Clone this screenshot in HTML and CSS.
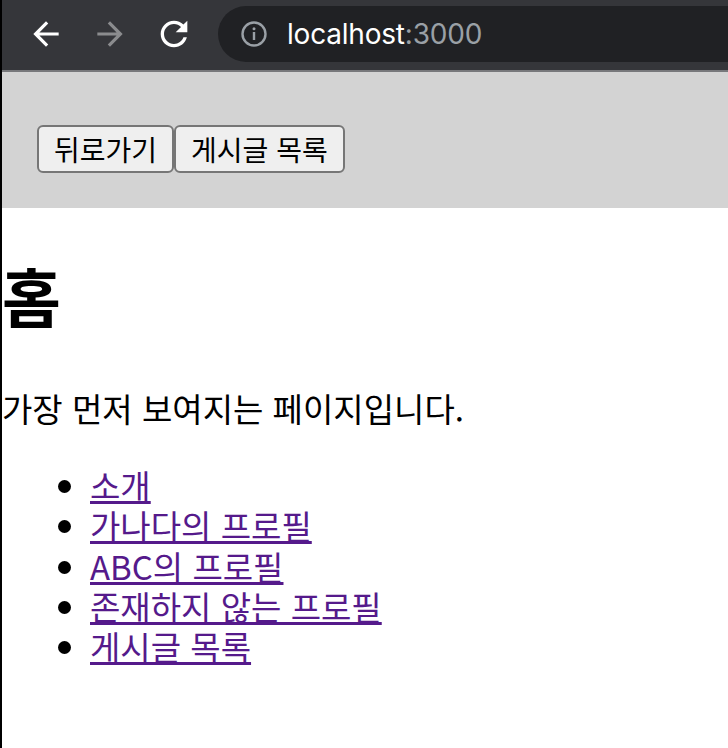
FILE: index.html
```html
<!DOCTYPE html>
<html lang="ko">
<head>
<meta charset="utf-8">
<title>localhost:3000</title>
<link rel="stylesheet" href="styles.css">
</head>
<body>
<div class="window">
  <div class="chrome">
    <svg class="icon icon-back" viewBox="0 0 24 24" width="38" height="38"><path d="M20 11H7.830l5.59-5.59L12 4l-8 8 8 8 1.41-1.41L7.83 13H20v-2z" fill="#ffffff"/></svg>
    <svg class="icon icon-fwd" viewBox="0 0 24 24" width="38" height="38"><path d="M12 4l-1.41 1.41L16.17 11H4v2h12.17l-5.58 5.59L12 20l8-8z" fill="#8b8c8e"/></svg>
    <svg class="icon icon-reload" viewBox="0 0 24 24" width="40" height="40"><path d="M17.65 6.35C16.2 4.9 14.21 4 12 4c-4.42 0-7.990 3.58-7.99 8s3.57 8 7.99 8c3.73 0 6.84-2.55 7.73-6h-2.08c-.82 2.33-3.04 4-5.65 4-3.31 0-6-2.69-6-6s2.69-6 6-6c1.66 0 3.14.69 4.22 1.78L13 11h7V4l-2.35 2.35z" fill="#ffffff"/></svg>
    <div class="omnibox">
      <svg class="info" viewBox="0 0 26 26" width="26" height="26"><circle cx="13" cy="13" r="11.5" fill="none" stroke="#9aa0a6" stroke-width="2.4"/><rect x="11.8" y="11" width="2.4" height="8" fill="#9aa0a6"/><circle cx="13" cy="7.8" r="1.5" fill="#9aa0a6"/></svg>
      <span class="url"><span class="host">localhost</span><span class="port">:3000</span></span>
    </div>
  </div>
  <div class="page">
    <header class="topnav"><button class="btn">뒤로가기</button><button class="btn">게시글 목록</button></header>
    <main class="content">
      <h1 class="title">홈</h1>
      <p class="lead">가장 먼저 보여지는 페이지입니다.</p>
      <ul class="links">
        <li><a href="#">소개</a></li>
        <li><a href="#">가나다의 프로필</a></li>
        <li><a href="#">ABC의 프로필</a></li>
        <li><a href="#">존재하지 않는 프로필</a></li>
        <li><a href="#">게시글 목록</a></li>
      </ul>
    </main>
  </div>
</div>
</body>
</html>
```

FILE: styles.css
```css
html, body {
  margin: 0;
  padding: 0;
  background: #ffffff;
}

.window {
  min-height: 748px;
  border-left: 2px solid #000000;
  font-family: "Noto Sans CJK KR", "Noto Sans", sans-serif;
  overflow: hidden;
}

.chrome {
  display: flex;
  align-items: center;
  height: 56px;
  padding: 6px 0 8px 0;
  background: #35363a;
  border-bottom: 2px solid #77787b;
}

.icon {
  display: block;
  flex: none;
}

.icon-back {
  margin-left: 25px;
}

.icon-fwd {
  margin-left: 26px;
}

.icon-reload {
  margin-left: 25px;
}

.omnibox {
  flex: 1;
  display: flex;
  align-items: center;
  height: 56px;
  margin-left: 24px;
  padding-left: 23px;
  background: #202124;
  border-radius: 28px 0 0 28px;
}

.info {
  display: block;
  flex: none;
}

.url {
  margin-left: 20px;
  font-family: Inter, Roboto, "Liberation Sans", sans-serif;
  font-size: 28px;
  line-height: 56px;
  letter-spacing: -0.2px;
}

.host {
  color: #ffffff;
}

.port {
  color: #9aa0a6;
}

.topnav {
  display: flex;
  padding: 53px 0 35px 35px;
  background: #d3d3d3;
}

.btn {
  margin: 0;
  padding: 0 15px;
  height: 48px;
  font-family: "Noto Sans CJK KR", sans-serif;
  font-size: 28px;
  line-height: 44px;
  color: #000000;
  background: #efefef;
  border: 2px solid #767676;
  border-radius: 6px;
}

.content {
  color: #000000;
}

.title {
  margin: 46px 0 0 0;
  font-size: 64px;
  line-height: 80px;
  font-weight: 700;
}

.lead {
  margin: 54px 0 0 0;
  font-size: 33px;
  line-height: 40px;
}

.links {
  margin: 37px 0 0 0;
  padding-left: 88px;
  font-size: 33px;
  line-height: 40.3px;
}

.links a {
  color: #551a8b;
  text-decoration: underline;
}
```
